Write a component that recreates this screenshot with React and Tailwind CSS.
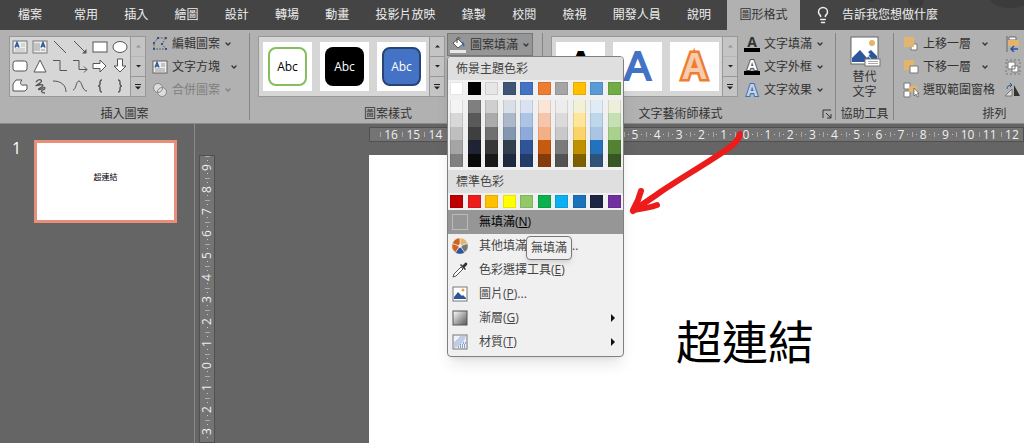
import { ChevronDown, Lightbulb } from 'lucide-react'

const tabs = ['常用', '插入', '繪圖', '設計', '轉場', '動畫', '投影片放映', '錄製', '校閱', '檢視', '開發人員', '說明']

const themeColors = [
  { base: 'bg-[#ffffff]', shades: ['bg-[#f4f4f4]', 'bg-[#d8d8d8]', 'bg-[#bfbfbf]', 'bg-[#a5a5a5]', 'bg-[#7f7f7f]'] },
  { base: 'bg-[#000000]', shades: ['bg-[#7f7f7f]', 'bg-[#595959]', 'bg-[#3f3f3f]', 'bg-[#1f2333]', 'bg-[#0a0a0a]'] },
  { base: 'bg-[#e7e6e6]', shades: ['bg-[#cfcfcf]', 'bg-[#ababab]', 'bg-[#707070]', 'bg-[#383838]', 'bg-[#191919]'] },
  { base: 'bg-[#3f5573]', shades: ['bg-[#d9dfe6]', 'bg-[#adb9ca]', 'bg-[#8497b0]', 'bg-[#323f4f]', 'bg-[#1f2a40]'] },
  { base: 'bg-[#4472c4]', shades: ['bg-[#d8e2f0]', 'bg-[#adc5e5]', 'bg-[#8eaadb]', 'bg-[#2f5597]', 'bg-[#223c6a]'] },
  { base: 'bg-[#ed7d31]', shades: ['bg-[#fbe5d6]', 'bg-[#f5c6ab]', 'bg-[#f4b084]', 'bg-[#c55a11]', 'bg-[#843c0c]'] },
  { base: 'bg-[#a5a5a5]', shades: ['bg-[#ededed]', 'bg-[#dbdbdb]', 'bg-[#c9c9c9]', 'bg-[#7b7b7b]', 'bg-[#525252]'] },
  { base: 'bg-[#ffc000]', shades: ['bg-[#f2f0d5]', 'bg-[#fde699]', 'bg-[#fad468]', 'bg-[#bf9000]', 'bg-[#7f6000]'] },
  { base: 'bg-[#5b9bd5]', shades: ['bg-[#e0ebf5]', 'bg-[#bfd7ea]', 'bg-[#abc4e4]', 'bg-[#2272bd]', 'bg-[#2f5279]'] },
  { base: 'bg-[#70ad47]', shades: ['bg-[#eeeeda]', 'bg-[#c5e0b4]', 'bg-[#a9d18e]', 'bg-[#548235]', 'bg-[#375623]'] },
]

const standardColors = [
  'bg-[#c00000]', 'bg-[#ed1c1c]', 'bg-[#ffc000]', 'bg-[#ffff00]', 'bg-[#92c968]',
  'bg-[#0bb04f]', 'bg-[#0bb0f0]', 'bg-[#1a72bd]', 'bg-[#1c2642]', 'bg-[#7030a0]',
]

const horizontalMarks = Array.from({ length: 29 }, (_, i) => Math.abs(i - 16))
const verticalMarks = Array.from({ length: 14 }, (_, i) => Math.abs(i - 9))

// Shape gallery, row by row
const shapes = [
  ['文字方塊', <><rect x="1" y="2" width="14" height="12" fill="#eee" stroke="#777" /><path d="M9 5h4M9 7h4M3 10h10M3 12h10" stroke="#bbb" /><path d="M3 8.5 5 3.5 7 8.5M3.7 7h2.6" stroke="#2b5797" strokeWidth="1.4" /></>],
  ['垂直文字方塊', <><rect x="1" y="2" width="14" height="12" fill="#eee" stroke="#777" /><path d="M3 4v8M5 4v8M7 4v8M10 10v2M12 10v2" stroke="#999" /><path d="M9 8.5 11 3.5 13 8.5M9.700 7h2.600" stroke="#2b5797" strokeWidth="1.4" /></>],
  ['直線', <path d="M2 2 14 14" />],
  ['箭號', <><path d="M2 2 14 14" /><path d="M14.5 10v4.5H10Z" fill="#555" stroke="none" /></>],
  ['矩形', <rect x="1" y="3" width="14" height="10" fill="#fff" />],
  ['橢圓', <ellipse cx="8" cy="8" rx="7" ry="5.5" fill="#fff" />],
  ['圓角矩形', <rect x="1" y="3" width="14" height="10" rx="2.5" fill="#fff" />],
  ['三角形', <path d="M8 2 14 14H2Z" fill="#fff" />],
  ['肘形接點', <path d="M1 2.500h7v10h7" />],
  ['肘形箭號接點', <><path d="M1 2.500h6v9h8" /><path d="M12 8.500 15 11.500 12 14.500" /></>],
  ['向右箭號', <path d="M1 5.500h7V2l6 6-6 6v-3.500H1Z" fill="#fff" />],
  ['向下箭號', <path d="M5.500 1v7H2l6 6 6-6h-3.500V1Z" fill="#fff" />],
  ['手繪多邊形', <path d="M1 13V6l3-4h6c-3 3-1 6 2 5h3v4l-2 2Z" fill="#fff" />],
  ['塗鴉', <path d="M4 4c3-4 8-2 4 1s-6 3-1 2 5 1 1 3 1 2 3 0 3 1 0 2-1 3 2 3" strokeWidth="1.3" />],
  ['弧形', <path d="M1 3c8 0 13 4 13 11" />],
  ['曲線', <path d="M1 12C4 12 4 3 7 3s3 10 8 10" />],
  ['左大括弧', <path d="M10 2c-2 0-2 1-2 3s0 3-2 3c2 0 2 1 2 3s0 3 2 3" strokeWidth="1.5" />],
  ['右大括弧', <path d="M6 2c2 0 2 1 2 3s0 3 2 3c-2 0-2 1-2 3s0 3-2 3" strokeWidth="1.5" />],
]

const Icon = ({ children, className = 'size-4' }) => (
  <svg viewBox="0 0 16 16" fill="none" stroke="#555" className={`shrink-0 ${className}`} aria-hidden="true">
    {children}
  </svg>
)

const EditShapeIcon = () => (
  <Icon>
    <path d="M2 13V7l4-5h8l-4 6 4 5Z" stroke="#666" strokeDasharray="2 1" />
    <path d="M1 6h2v2H1zM5 1h2v2H5zM13 1h2v2h-2zM9 7h2v2H9zM13 12h2v2h-2zM1 12h2v2H1z" fill="#2b579a" stroke="none" />
  </Icon>
)

const TextBoxIcon = () => (
  <Icon>
    <rect x="1" y="2" width="14" height="12" fill="#eee" stroke="#666" />
    <path d="M9 5h4M9 7h4M3 10h10M3 12h10" stroke="#999" />
    <path d="M3 8.5 5 3.5 7 8.5M3.7 7h2.6" stroke="#2b5797" strokeWidth="1.4" />
  </Icon>
)

const MergeIcon = () => (
  <Icon>
    <circle cx="6" cy="6" r="4.5" fill="#ddd" stroke="#888" />
    <circle cx="10" cy="10" r="4.5" fill="#ddd" stroke="#888" />
    <path d="M10.500 6a4.500 4.500 0 0 1-4.500 4.500" stroke="#888" />
  </Icon>
)

const BucketIcon = () => (
  <Icon>
    <path d="m3 6 5-4 5 5-5 4-5-5Z" fill="#fff" stroke="#555" />
    <path d="M7 6V2c0-2 3-2 3 0" stroke="#444" />
    <path d="M12 5c2 0 3 2 2 5l-2-3Z" fill="#2b6cb8" stroke="none" />
    <path d="M0 13h16v3H0z" fill="#e8e8e8" stroke="none" />
  </Icon>
)

const PictureIcon = ({ className }) => (
  <Icon className={className}>
    <rect x="1" y="1" width="14" height="14" fill="#fff" stroke="#777" />
    <path d="M2 13v-2l4-5 4 4 1-1 3 3v1Z" fill="#2b579a" stroke="none" />
    <circle cx="11" cy="4" r="1.5" fill="#e59a53" stroke="none" />
  </Icon>
)

const AltTextIcon = () => (
  <svg viewBox="0 0 32 32" className="size-8" fill="none" aria-hidden="true">
    <rect x="2" y="2" width="27" height="27" fill="#fff" stroke="#666" />
    <circle cx="23" cy="8" r="3" fill="#e2b46e" />
    <path d="M3 27v-4l8-8 7 8 3-4-2-2 3-2 6 6v6Z" fill="#2b579a" />
    <path d="m15 16 8 9" stroke="#fff" />
    <rect x="16" y="24" width="15" height="7" fill="#fff" stroke="#777" />
    <path d="M19 26.5h10M19 28.5h10" stroke="#aaa" />
  </svg>
)

const ForwardIcon = () => (
  <Icon>
    <path d="M8 8h6v6H8z" fill="#fff" stroke="#777" />
    <path d="M1 1h10v10H1z" fill="#e2b46e" stroke="none" />
  </Icon>
)

const BackwardIcon = () => (
  <Icon>
    <path d="M1 1h10v10H1z" fill="#e2b46e" stroke="none" />
    <path d="M7 7h8v7H7z" fill="#fff" stroke="#777" />
  </Icon>
)

const SelectionIcon = () => (
  <Icon>
    <path d="M1 1h6v6H1zM1 9h6v6H1z" fill="#fff" stroke="#777" />
    <path d="M6 4h8v6H6z" fill="#e2b46e" stroke="none" />
    <path d="M11 6v8l2-2 1 3 1.5-.5-1-3H16Z" fill="#fff" stroke="#555" strokeWidth=".7" />
  </Icon>
)

const AlignIcon = () => (
  <Icon>
    <path d="M2 0v16" stroke="#666" />
    <path d="M4 1h7v3H4z" fill="#fff" stroke="#666" />
    <path d="M3 4h11v6H3z" fill="#e2b46e" stroke="none" />
    <path d="M13 13H6m3-3-3 3 3 3" stroke="#2b579a" strokeWidth="1.5" />
  </Icon>
)

const GroupIcon = () => (
  <Icon>
    <rect x="1" y="1" width="14" height="14" stroke="#777" strokeDasharray="2 2" />
    <path d="M3 3h7v7H3zM7 7h6v6H7z" fill="#fff" stroke="#777" />
  </Icon>
)

const RotateIcon = () => (
  <Icon>
    <path d="M0 14h7V7Z" fill="#ddd" stroke="#777" />
    <path d="M9 14V3l6 11Z" fill="#333" stroke="none" />
    <path d="M2 7c0-3 2-4 5-4M5 1l2 2-2 2" stroke="#2b579a" />
  </Icon>
)

const ColorWheelIcon = () => (
  <svg viewBox="0 0 16 16" className="size-4 shrink-0" stroke="#f0f0f0" strokeWidth=".6" aria-hidden="true">
    <path d="M8 8V0a8 8 0 0 1 7.6 5.5Z" fill="#e2b46e" />
    <path d="m8 8 7.6-2.500a8 8 0 0 1-2.900 9Z" fill="#777" />
    <path d="m8 8 4.700 6.500a8 8 0 0 1-9.400 0Z" fill="#2b579a" />
    <path d="m8 8-4.700 6.500a8 8 0 0 1-2.900-9Z" fill="#cf6320" />
    <path d="M8 8 .4 5.500A8 8 0 0 1 8 0Z" fill="#cf6320" />
    <circle cx="8" cy="8" r="1.5" fill="#f0f0f0" />
  </svg>
)

const EyedropperIcon = () => (
  <Icon>
    <path d="m9 5 2 2-7 7-3 1 1-3Z" fill="#fff" stroke="#555" />
    <path d="m8 3 5 5 1-1-1.5-1.5L15 3c1-2-1-3-2-2l-2.5 2.500L9 2Z" fill="#333" stroke="none" />
  </Icon>
)

const GradientIcon = () => (
  <Icon>
    <defs>
      <linearGradient id="gradientFill" x1="0" y1="0" x2="1" y2="1">
        <stop stopColor="#fff" />
        <stop offset="1" stopColor="#555" />
      </linearGradient>
    </defs>
    <rect x="1" y="1" width="14" height="14" fill="url(#gradientFill)" stroke="#555" />
  </Icon>
)

const TextureIcon = () => (
  <Icon>
    <rect x="1" y="1" width="14" height="14" fill="#eef2f8" stroke="#777" />
    <path d="M2 14V8l6-6h6C12 8 8 12 2 14Z" fill="#bccde4" stroke="none" />
    <path d="M2 7c2-1 4-3 5-5" stroke="#fff" />
    <path d="M6 13h8M8 11h6M11 9h3" stroke="#2b579a" strokeDasharray="1 1" />
  </Icon>
)

const Chevron = () => <ChevronDown className="size-2 shrink-0" strokeWidth={4} />

const ToolButton = ({ icon, label, arrow = true, className = '' }) => (
  <button className={`flex h-[22px] items-center gap-1 whitespace-nowrap ${className}`}>
    {icon}
    <span>{label}</span>
    {arrow && <Chevron />}
  </button>
)

const RibbonGroup = ({ label, width, children, labelClass = '' }) => (
  <section className={`flex h-[87px] shrink-0 flex-col justify-between border-r border-[#858585] ${width}`}>
    <div className="flex">{children}</div>
    <h2 className={`text-center leading-3 ${labelClass}`}>{label}</h2>
  </section>
)

const Gallery = ({ children, upDisabled }) => (
  <div className="mt-[3px] flex h-[61px] border border-[#989898] bg-[#d6d6d6]">
    {children}
    <div className="flex w-[15px] flex-col divide-y divide-[#989898] border-l border-[#989898] bg-[#c4c4c4]">
      <button aria-label="上一列" className={`flex flex-1 items-center justify-center ${upDisabled ? 'opacity-30' : ''}`}>
        <svg viewBox="0 0 6 3" className="w-[5px]"><path d="M0 3 3 0l3 3Z" fill="#222" /></svg>
      </button>
      <button aria-label="下一列" className="flex flex-1 items-center justify-center">
        <svg viewBox="0 0 6 3" className="w-[5px]"><path d="M0 0h6L3 3Z" fill="#222" /></svg>
      </button>
      <button aria-label="其他" className="flex flex-1 items-center justify-center">
        <svg viewBox="0 0 6 6" className="w-[6px]"><path d="M0 0h6v1H0zM0 2.500h6l-3 3Z" fill="#222" /></svg>
      </button>
    </div>
  </div>
)

const Tile = ({ children }) => (
  <button className="flex size-[49px] items-center justify-center overflow-hidden bg-white">{children}</button>
)

const SwatchRow = ({ colors }) => (
  <div className="flex justify-between px-[2px]">
    {colors.map((c) => (
      <button key={c} aria-label="色彩" className={`size-[13px] border border-black/10 ${c}`} />
    ))}
  </div>
)

const MenuItem = ({ icon, label, accel, suffix, submenu, active, children }) => (
  <li role="none" className="relative">
    <button
      role="menuitem"
      className={`flex h-6 w-full items-center pr-2 pl-1 ${active ? 'bg-[#969696] text-black' : ''}`}
    >
      {icon}
      <span className="ml-[11px] flex-1 text-left">
        {label}(<u>{accel}</u>){suffix}
      </span>
      {submenu && (
        <svg viewBox="0 0 4 8" className="h-2 w-1"><path d="m0 0 4 4-4 4Z" fill="#111" /></svg>
      )}
    </button>
    {children}
  </li>
)

const FillMenu = () => (
  <div className="absolute top-full left-0 z-20 w-[177px] overflow-hidden rounded-[4px] border border-[#808080] bg-[#f0f0f0] text-[#444] shadow-lg">
    <h3 className="h-[23px] bg-[#dfdfdf] pl-2 leading-[23px]">佈景主題色彩</h3>
    <div className="flex flex-col gap-[5px] pt-[2px] pb-[3px]">
      <SwatchRow colors={themeColors.map((c) => c.base)} />
      <div className="flex justify-between px-[2px]">
        {themeColors.map(({ base, shades }) => (
          <div key={base} className="flex h-[67px] w-[13px] flex-col">
            {shades.map((s) => (
              <button key={s} aria-label="色彩" className={`flex-1 border-x border-black/10 ${s}`} />
            ))}
          </div>
        ))}
      </div>
    </div>
    <h3 className="h-[23px] bg-[#dfdfdf] pl-2 leading-[23px]">標準色彩</h3>
    <div className="py-[2px]">
      <SwatchRow colors={standardColors} />
    </div>
    <ul role="menu" className="pb-[2px]">
      <MenuItem active icon={<span className="size-4 border border-[#bbb]" />} label="無填滿" accel="N" />
      <MenuItem icon={<ColorWheelIcon />} label="其他填滿色彩" accel="M" suffix="...">
        <span
          role="tooltip"
          className="absolute top-[2px] left-[78px] rounded-[4px] border border-[#777] bg-[#f0f0f0] px-1 leading-[22px] shadow-md"
        >
          無填滿
        </span>
      </MenuItem>
      <MenuItem icon={<EyedropperIcon />} label="色彩選擇工具" accel="E" />
      <MenuItem icon={<PictureIcon />} label="圖片" accel="P" suffix="..." />
      <MenuItem icon={<GradientIcon />} label="漸層" accel="G" submenu />
      <MenuItem icon={<TextureIcon />} label="材質" accel="T" submenu />
    </ul>
  </div>
)

const TabBar = () => (
  <header className="relative flex h-[30px] shrink-0 items-center bg-[#444] text-[#eee]">
    <button className="w-[74px] shrink-0 pl-[18px] text-left">檔案</button>
    <nav className="flex w-[637px] shrink-0 justify-between">
      {tabs.map((t) => (
        <button key={t} className="whitespace-nowrap">{t}</button>
      ))}
    </nav>
    <button className="ml-4 h-full w-[73px] shrink-0 bg-[#b1b1b1] text-[#333]">圖形格式</button>
    <button className="ml-3.5 flex shrink-0 items-center gap-2.5">
      <Lightbulb className="size-[18px]" strokeWidth={2} />
      告訴我您想做什麼
    </button>
    <svg viewBox="0 0 160 10" className="absolute top-0 right-0 h-2.5 w-40" fill="#3b3b3b" aria-hidden="true">
      <circle cx="7" cy="-2" r="4" />
      <circle cx="52" cy="0" r="8" />
      <ellipse cx="146" cy="-2" rx="20" ry="10" />
    </svg>
  </header>
)

const Ribbon = () => (
  <div className="relative z-10 flex shrink-0 border-b border-[#8a8a8a] bg-[#b1b1b1] pt-[3px] pb-[3px] text-[#333]">
    <RibbonGroup label="插入圖案" width="w-[250px]">
      <div className="ml-[9px] flex gap-[6px]">
        <Gallery upDisabled>
          <div className="grid w-[120px] grid-cols-6 place-items-center">
            {shapes.map(([name, drawing]) => (
              <button key={name} aria-label={name}><Icon>{drawing}</Icon></button>
            ))}
          </div>
        </Gallery>
        <div className="flex flex-col gap-px">
          <ToolButton icon={<EditShapeIcon />} label="編輯圖案" />
          <ToolButton icon={<TextBoxIcon />} label={<span className="pr-[6px]">文字方塊</span>} />
          <ToolButton icon={<MergeIcon />} label="合併圖案" className="text-[#808080]" />
        </div>
      </div>
    </RibbonGroup>

    <RibbonGroup label="圖案樣式" width="w-[293px]" labelClass="pr-4">
      <div className="ml-2 flex gap-[2px]">
        <Gallery>
          <div className="flex w-[170px] items-center gap-2 pl-1">
            <Tile>
              <span className="flex size-[39px] items-center justify-center rounded-lg border-2 border-[#84bf5c] text-black">Abc</span>
            </Tile>
            <Tile>
              <span className="flex size-[39px] items-center justify-center rounded-lg bg-black text-white">Abc</span>
            </Tile>
            <Tile>
              <span className="flex size-[39px] items-center justify-center rounded-lg border-2 border-[#264474] bg-[#4472c4] text-white">Abc</span>
            </Tile>
          </div>
        </Gallery>
        <div className="relative h-[23px]">
          <button className="flex h-[23px] w-[86px] items-center gap-1 border border-[#777] bg-[#969696] pl-[2px]">
            <BucketIcon />
            圖案填滿
            <Chevron />
          </button>
          <FillMenu />
        </div>
      </div>
    </RibbonGroup>

    <RibbonGroup
      label={
        <span className="flex items-center justify-between pr-[3px]">
          <span className="flex-1 pr-1">文字藝術師樣式</span>
          <button aria-label="格式化文字效果">
            <svg viewBox="0 0 10 10" className="size-2.5" fill="none" stroke="#333">
              <path d="M1 9V1h8M4 4l5 5M9 5v4H5" />
            </svg>
          </button>
        </span>
      }
      width="w-[293px]"
    >
      <div className="ml-2 flex gap-[6px]">
        <Gallery upDisabled>
          <div className="flex w-[170px] items-center gap-2 pl-1 font-['Liberation_Sans',sans-serif] text-[40px]">
            <Tile><span className="text-black [-webkit-text-stroke:2px_#000]">A</span></Tile>
            <Tile><span className="text-[#4472c4] [-webkit-text-stroke:2px_#4472c4]">A</span></Tile>
            <Tile>
              <span className="text-4xl font-bold text-[#f8cbad] [paint-order:stroke_fill] [stroke-linejoin:round] [-webkit-text-stroke:5px_#ed7d31]">A</span>
            </Tile>
          </div>
        </Gallery>
        <div className="flex flex-col gap-px">
          <ToolButton
            icon={<span className="w-4 border-b-4 border-black text-center text-sm leading-3 font-bold">A</span>}
            label="文字填滿"
          />
          <ToolButton
            icon={<span className="w-4 border-b-4 border-black text-center text-sm leading-3 font-bold text-white [paint-order:stroke_fill] [-webkit-text-stroke:2px_#555]">A</span>}
            label="文字外框"
          />
          <ToolButton
            icon={<span className="w-4 text-center text-base leading-4 font-bold text-[#c8d4e8] [paint-order:stroke_fill] [-webkit-text-stroke:2px_#3b70b8]">A</span>}
            label="文字效果"
          />
        </div>
      </div>
    </RibbonGroup>

    <RibbonGroup label="協助工具" width="w-[58px]">
      <button className="flex w-full flex-col items-center pt-[2px] leading-[15px]">
        <AltTextIcon />
        <span className="w-6 pt-[2px]">替代文字</span>
      </button>
    </RibbonGroup>

    <RibbonGroup label="排列" width="w-[202px]">
      <div className="ml-[9px] flex gap-[10px]">
        <div className="flex flex-col gap-px">
          <ToolButton icon={<ForwardIcon />} label={<span className="pr-[6px]">上移一層</span>} />
          <ToolButton icon={<BackwardIcon />} label={<span className="pr-[6px]">下移一層</span>} />
          <ToolButton icon={<SelectionIcon />} label="選取範圍窗格" arrow={false} />
        </div>
        <div className="flex flex-col gap-px">
          <ToolButton icon={<AlignIcon />} label="對齊" />
          <ToolButton icon={<GroupIcon />} label="群組" />
          <ToolButton icon={<RotateIcon />} label="旋轉" />
        </div>
      </div>
    </RibbonGroup>
  </div>
)

// Half-way tick, then dot - number - dot
const HorizontalRuler = () => (
  <div className="flex h-[15px] border border-[#505050] bg-[#747474] pl-[10px]">
    {horizontalMarks.map((n, i) => (
      <div key={i} className="flex min-w-0 flex-1 items-center justify-between">
        <span className="h-[5px] w-px bg-[#aaa]" />
        {n < 10 && <span className="h-px w-px bg-[#ccc]" />}
        <span className="leading-[13px]">{n}</span>
        {n < 10 && <span className="h-px w-px bg-[#ccc]" />}
        <span className="w-px" />
      </div>
    ))}
  </div>
)

const VerticalRuler = () => (
  <div className="ml-1 flex w-4 flex-col overflow-hidden border border-[#505050] bg-[#747474]">
    {verticalMarks.map((n, i) => (
      <div key={i} className="flex h-[22px] shrink-0 flex-col items-center justify-between">
        <span className="h-px w-[5px] bg-[#aaa]" />
        <span className="h-px w-px bg-[#ccc]" />
        <span className="rotate-180 text-center leading-[14px] [writing-mode:vertical-rl]">{n}</span>
        <span className="h-px w-px bg-[#ccc]" />
        <span className="h-px" />
      </div>
    ))}
  </div>
)

const App = () => (
  <div className="relative flex h-screen flex-col overflow-hidden bg-[#656565] font-['Open_Sans','Noto_Sans_CJK_TC',sans-serif] text-xs">
    <TabBar />
    <Ribbon />

    <div className="flex min-h-0 flex-1">
      <aside className="flex w-[195px] shrink-0 items-start border-r border-[#8a8a8a] pt-4 pl-3">
        <span className="w-[22px] text-base leading-4 text-white">1</span>
        <button className="flex h-[83px] w-[143px] items-center justify-center border-[3px] border-[#e88f7c] bg-white pb-2 text-[8px] text-black">
          超連結
        </button>
      </aside>

      <main className="flex min-w-0 flex-1 text-[#eee]">
        <div className="flex pt-[31px]">
          <VerticalRuler />
        </div>
        <div className="ml-[154px] flex min-w-0 flex-1 flex-col pt-[3px]">
          <HorizontalRuler />
          <div className="mt-[13px] flex-1">
            <article className="h-[423px] w-[752px] bg-white pt-[152px] text-center text-black">
              <h1 className="text-[46px] leading-[68px] font-normal">超連結</h1>
            </article>
          </div>
        </div>
      </main>
    </div>

    {/* Hand-drawn pointer to the highlighted menu entry */}
    <svg
      viewBox="0 0 120 90"
      className="pointer-events-none absolute top-[128px] left-[626px] z-30 h-[90px] w-[120px]"
      fill="none"
      stroke="#ed1c1c"
      strokeWidth="6"
      strokeLinecap="round"
      strokeLinejoin="round"
      aria-hidden="true"
    >
      <path d="M114 6c-1 7-8 12-14 16C78 37 52 52 33 65 22 73 13 78 7 83" />
      <path d="M15 63C13 71 10 77 7 82c8-1 16-2 24-5" />
    </svg>
  </div>
)

export default App
